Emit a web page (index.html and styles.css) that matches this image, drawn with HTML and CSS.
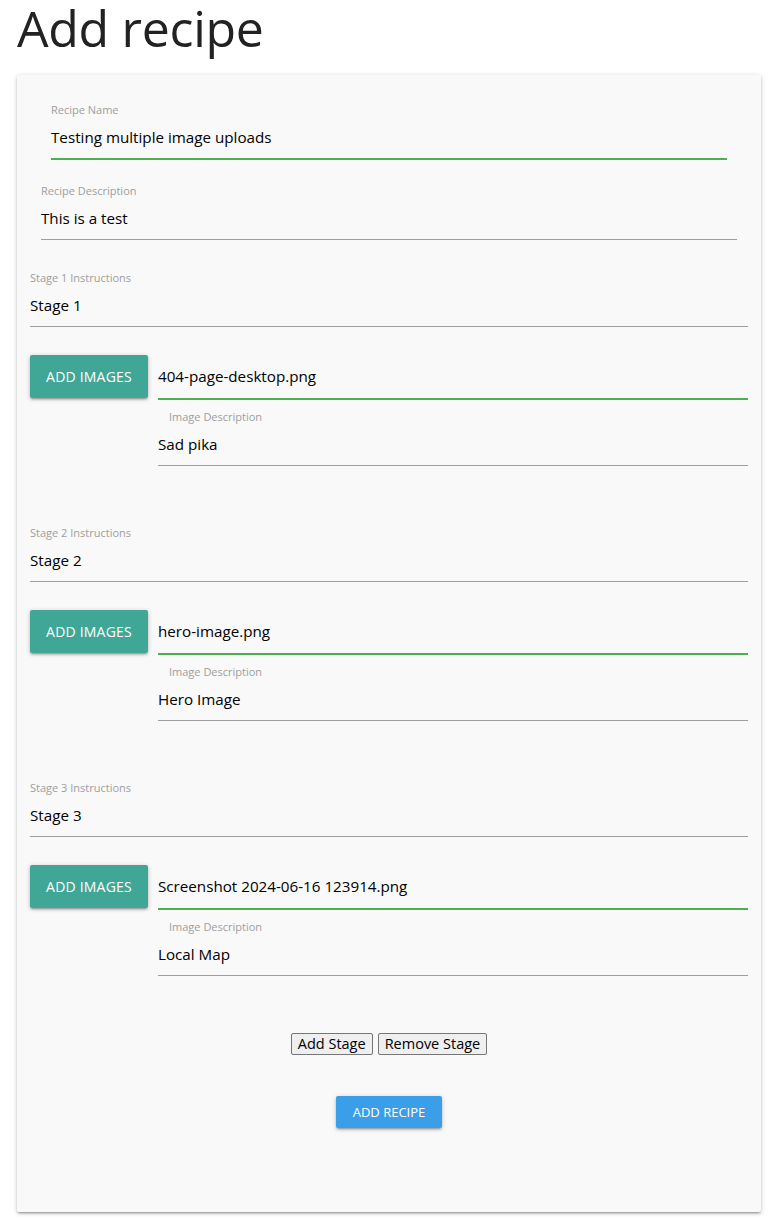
FILE: index.html
```html
<!DOCTYPE html>
<html lang="en">
<head>
<meta charset="utf-8">
<title>Add recipe</title>
<link rel="stylesheet" href="styles.css">
</head>
<body>
<div class="page">
  <h1 class="title">Add recipe</h1>
  <form class="card">
    <div class="field field-name">
      <label class="field-label">Recipe Name</label>
      <div class="field-input focused">Testing multiple image uploads</div>
    </div>
    <div class="field field-desc">
      <label class="field-label">Recipe Description</label>
      <div class="field-input">This is a test</div>
    </div>

    <div class="stage">
      <div class="field">
        <label class="field-label">Stage 1 Instructions</label>
        <div class="field-input">Stage 1</div>
      </div>
      <div class="image-row">
        <button type="button" class="btn-images">ADD IMAGES</button>
        <div class="image-col">
          <div class="file-input">404-page-desktop.png</div>
          <div class="field field-img">
            <label class="field-label">Image Description</label>
            <div class="field-input">Sad pika</div>
          </div>
        </div>
      </div>
    </div>

    <div class="stage">
      <div class="field">
        <label class="field-label">Stage 2 Instructions</label>
        <div class="field-input">Stage 2</div>
      </div>
      <div class="image-row">
        <button type="button" class="btn-images">ADD IMAGES</button>
        <div class="image-col">
          <div class="file-input">hero-image.png</div>
          <div class="field field-img">
            <label class="field-label">Image Description</label>
            <div class="field-input">Hero Image</div>
          </div>
        </div>
      </div>
    </div>

    <div class="stage">
      <div class="field">
        <label class="field-label">Stage 3 Instructions</label>
        <div class="field-input">Stage 3</div>
      </div>
      <div class="image-row">
        <button type="button" class="btn-images">ADD IMAGES</button>
        <div class="image-col">
          <div class="file-input">Screenshot 2024-06-16 123914.png</div>
          <div class="field field-img">
            <label class="field-label">Image Description</label>
            <div class="field-input">Local Map</div>
          </div>
        </div>
      </div>
    </div>

    <div class="stage-buttons">
      <button type="button" class="btn-native">Add Stage</button>
      <button type="button" class="btn-native">Remove Stage</button>
    </div>
    <div class="submit-row">
      <button type="button" class="btn-submit">ADD RECIPE</button>
    </div>
  </form>
</div>
</body>
</html>
```
FILE: styles.css
```css
* { box-sizing: border-box; }
html, body { margin: 0; padding: 0; background: #ffffff; }
body {
  font-family: "Open Sans", "Noto Sans", sans-serif;
  color: rgba(0, 0, 0, 0.87);
}
.page {
  padding: 0 11px 10px 17px;
}
.title {
  margin: 0 0 19px 0;
  font-size: 50px;
  line-height: 56px;
  font-weight: 400;
  color: #222222;
  letter-spacing: -0.3px;
}
.card {
  display: block;
  background: #f9f9f9;
  border-radius: 2px;
  box-shadow: 0 2px 2px 0 rgba(0,0,0,0.14), 0 3px 1px -2px rgba(0,0,0,0.12), 0 1px 5px 0 rgba(0,0,0,0.2);
  padding: 26px 13px 84px 13px;
}
.field { display: block; }
.field-label {
  display: block;
  height: 16px;
  line-height: 17px;
  font-size: 11px;
  color: #9e9e9e;
}
.field-input {
  height: 42px;
  line-height: 41px;
  font-size: 15.2px;
  color: #000000;
  border-bottom: 1px solid #9e9e9e;
  white-space: nowrap;
}
.field-input.focused {
  height: 43px;
  border-bottom: 2px solid #4caf50;
}
.field-name { margin: 0 21px; }
.field-desc { margin: 22px 11px 0 11px; }
.stage { margin-top: 58px; }
.field-desc + .stage { margin-top: 29px; }
.image-row {
  display: flex;
  gap: 10px;
  margin-top: 28px;
  align-items: flex-start;
}
.btn-images {
  flex: 0 0 118px;
  height: 43px;
  border: none;
  border-radius: 2px;
  background: #40a797;
  color: #ffffff;
  font-family: "Open Sans", "Noto Sans", sans-serif;
  font-size: 14px;
  letter-spacing: 0.2px;
  padding: 0;
  box-shadow: 0 2px 2px 0 rgba(0,0,0,0.14), 0 3px 1px -2px rgba(0,0,0,0.12), 0 1px 5px 0 rgba(0,0,0,0.2);
}
.image-col { flex: 1 1 auto; min-width: 0; }
.file-input {
  height: 45px;
  line-height: 43px;
  font-size: 15.2px;
  color: #000000;
  border-bottom: 2px solid #4caf50;
  white-space: nowrap;
}
.field-img { margin-top: 8px; }
.field-img .field-label { padding-left: 11px; }
.stage-buttons {
  display: flex;
  justify-content: center;
  gap: 5px;
  margin-top: 57px;
}
.btn-native {
  height: 22px;
  padding: 0 6px;
  font-family: "Open Sans", "Noto Sans", sans-serif;
  font-size: 14.5px;
  line-height: 20px;
  color: #000000;
  background: #efefef;
  border: 1px solid #767676;
  border-radius: 2px;
}
.submit-row {
  display: flex;
  justify-content: center;
  margin-top: 41px;
}
.btn-submit {
  width: 106px;
  height: 32px;
  border: none;
  border-radius: 2px;
  background: #3a9ee8;
  color: #ffffff;
  font-family: "Open Sans", "Noto Sans", sans-serif;
  font-size: 13px;
  padding: 0;
  box-shadow: 0 2px 2px 0 rgba(0,0,0,0.14), 0 3px 1px -2px rgba(0,0,0,0.12), 0 1px 5px 0 rgba(0,0,0,0.2);
}
```
